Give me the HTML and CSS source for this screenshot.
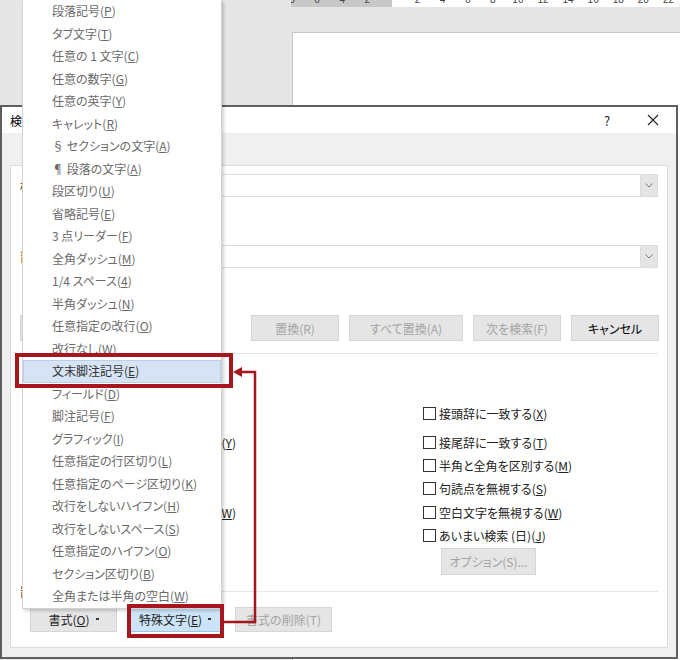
FILE: index.html
```html
<!DOCTYPE html>
<html lang="ja">
<head>
<meta charset="utf-8">
<title>検索と置換</title>
<link rel="stylesheet" href="styles.css">
</head>
<body>
<div class="word">
  <div class="ruler">
    <div class="nums">
      <span>8</span><span>6</span><span>4</span><span>2</span><span></span><span>2</span><span>4</span><span>6</span><span>8</span><span>10</span><span>12</span><span>14</span><span>16</span><span>18</span><span>20</span><span>22</span>
    </div>
  </div>
  <div class="page"></div>
</div>

<div class="dialog">
  <div class="titlebar">
    <span class="title">検索と置換</span>
    <span class="help">?</span>
    <span class="close"><svg width="12" height="12" viewBox="0 0 12 12"><path d="M1 1 L11 11 M11 1 L1 11" stroke="#222" stroke-width="1.1" fill="none"/></svg></span>
  </div>
  <div class="panel">
    <div class="field-row">
      <span class="label">検索する文字列(<u>N</u>):</span>
      <div class="combo"><span class="drop"><svg width="8" height="5" viewBox="0 0 8 5"><path d="M0.5 0.5 L4 4 L7.5 0.5" stroke="#7a7a7a" stroke-width="1" fill="none"/></svg></span></div>
    </div>
    <div class="options-gap"></div>
    <div class="field-row">
      <span class="label label-alt">置換後の文字列(<u>I</u>):</span>
      <div class="combo"><span class="drop"><svg width="8" height="5" viewBox="0 0 8 5"><path d="M0.5 0.5 L4 4 L7.5 0.5" stroke="#7a7a7a" stroke-width="1" fill="none"/></svg></span></div>
    </div>
    <div class="btn-row">
      <button class="btn btn-less">&lt;&lt; オプションを減らす(<u>L</u>)</button>
      <div class="btn-group">
        <button class="btn btn-w88 disabled">置換(R)</button>
        <button class="btn btn-w114 disabled">すべて置換(A)</button>
        <button class="btn btn-w88 disabled">次を検索(F)</button>
        <button class="btn btn-w88 strong">キャンセル</button>
      </div>
    </div>
    <div class="sep"></div>
    <div class="opts">
      <div class="col col-left">
        <div class="chk-row first"><span class="box"></span><span>大文字と小文字を区別する(<u>H</u>)</span></div>
        <div class="chk-row end"><span class="box"></span><span>完全に一致する単語だけを検索する(<u>Y</u>)</span></div>
        <div class="chk-row"><span class="box"></span><span>ワイルドカードを使用する(<u>U</u>)</span></div>
        <div class="chk-row"><span class="box"></span><span>あいまい検索 (英)(<u>K</u>)</span></div>
        <div class="chk-row end"><span class="box"></span><span>英単語の異なる活用形も検索する(<u>W</u>)</span></div>
      </div>
      <div class="col">
        <div class="chk-row first"><span class="box"></span><span>接頭辞に一致する(<u>X</u>)</span></div>
        <div class="chk-row"><span class="box"></span><span>接尾辞に一致する(<u>T</u>)</span></div>
        <div class="chk-row"><span class="box"></span><span>半角と全角を区別する(<u>M</u>)</span></div>
        <div class="chk-row"><span class="box"></span><span>句読点を無視する(<u>S</u>)</span></div>
        <div class="chk-row"><span class="box"></span><span>空白文字を無視する(<u>W</u>)</span></div>
        <div class="chk-row"><span class="box"></span><span>あいまい検索 (日)(<u>J</u>)</span></div>
        <button class="btn btn-opt disabled">オプション(S)...</button>
      </div>
    </div>
    <div class="group-head"><span class="group-label">置換</span><span class="group-line"></span></div>
    <div class="bottom-row">
      <button class="btn btn-fmt">書式(<u>O</u>)<span class="caret"></span></button>
      <button class="btn btn-special">特殊文字(<u>E</u>)<span class="caret"></span></button>
      <button class="btn btn-clear disabled">書式の削除(T)</button>
    </div>
  </div>
</div>

<div class="menu">
  <div class="item">段落記号(<u>P</u>)</div>
  <div class="item">タブ文字(<u>T</u>)</div>
  <div class="item">任意の 1 文字(<u>C</u>)</div>
  <div class="item">任意の数字(<u>G</u>)</div>
  <div class="item">任意の英字(<u>Y</u>)</div>
  <div class="item">キャレット(<u>R</u>)</div>
  <div class="item">§ セクションの文字(<u>A</u>)</div>
  <div class="item">¶ 段落の文字(<u>A</u>)</div>
  <div class="item">段区切り(<u>U</u>)</div>
  <div class="item">省略記号(<u>E</u>)</div>
  <div class="item">3 点リーダー(<u>F</u>)</div>
  <div class="item">全角ダッシュ(<u>M</u>)</div>
  <div class="item">1/4 スペース(<u>4</u>)</div>
  <div class="item">半角ダッシュ(<u>N</u>)</div>
  <div class="item">任意指定の改行(<u>O</u>)</div>
  <div class="item">改行なし(<u>W</u>)</div>
  <div class="item active">文末脚注記号(<u>E</u>)</div>
  <div class="item">フィールド(<u>D</u>)</div>
  <div class="item">脚注記号(<u>F</u>)</div>
  <div class="item">グラフィック(<u>I</u>)</div>
  <div class="item">任意指定の行区切り(<u>L</u>)</div>
  <div class="item">任意指定のページ区切り(<u>K</u>)</div>
  <div class="item">改行をしないハイフン(<u>H</u>)</div>
  <div class="item">改行をしないスペース(<u>S</u>)</div>
  <div class="item">任意指定のハイフン(<u>O</u>)</div>
  <div class="item">セクション区切り(<u>B</u>)</div>
  <div class="item">全角または半角の空白(<u>W</u>)</div>
</div>

<div class="mark mark-item"></div>
<div class="mark mark-btn"></div>
<svg class="arrow" width="680" height="660" viewBox="0 0 680 660">
  <path d="M223 622 H255 V372 H239" stroke="#a6171d" stroke-width="2.5" fill="none"/>
  <polygon points="233,372 242,367 242,377" fill="#a6171d"/>
</svg>
</body>
</html>
```

FILE: styles.css
```css
* { box-sizing: border-box; }
html, body { margin: 0; padding: 0; }
body {
  width: 680px;
  height: 660px;
  overflow: hidden;
  position: relative;
  background: #e6e6e6;
  font-family: "Noto Sans CJK JP", "Noto Sans", sans-serif;
  font-size: 12px;
  font-feature-settings: "palt";
  color: #222;
}
u { text-decoration: underline; text-underline-offset: 1px; }

.word { height: 660px; background: #e6e6e6; }
.ruler {
  margin-left: 291px;
  height: 7px;
  overflow: hidden;
  background: linear-gradient(to right, #c8c8c8 101px, #ffffff 101px);
}
.nums {
  display: flex;
  margin-left: -11.5px;
  margin-top: -6px;
  font-family: "Liberation Sans", sans-serif;
  font-size: 10px;
  line-height: 12px;
  color: #444;
}
.nums span { flex: 0 0 25.1px; text-align: center; }
.page {
  margin-left: 292px;
  margin-top: 25px;
  height: 640px;
  background: #fff;
  border-top: 1px solid #c6c6c6;
  border-left: 1px solid #c6c6c6;
}

.dialog {
  position: absolute;
  left: 0;
  top: 105px;
  width: 678px;
  height: 554px;
  border: 2px solid #5f5f5f;
  background: #f0f0f0;
}
.titlebar {
  height: 26px;
  background: #fff;
  display: flex;
  align-items: center;
  padding-left: 8px;
  padding-right: 13px;
}
.title { font-size: 12px; color: #000; }
.help { margin-left: auto; width: 20px; text-align: center; font-size: 13px; color: #222; }
.close { width: 20px; margin-left: 26px; display: flex; justify-content: center; }

.panel {
  margin: 32px 8px 0 8px;
  height: 483px;
  background: #fff;
  border: 1px solid #dcdcdc;
  padding: 8px 9px 0 9px;
}
.field-row {
  display: grid;
  grid-template-columns: 120px 1fr;
  height: 23px;
  align-items: center;
}
.label { line-height: 23px; color: #222; white-space: nowrap; }
.label-alt { color: #9a5a1e; }
.combo {
  height: 23px;
  border: 1px solid #dcdcdc;
  background: #fff;
  display: flex;
  justify-content: flex-end;
}
.drop {
  width: 17px;
  background: #e5e5e5;
  border-left: 1px solid #dcdcdc;
  display: flex;
  align-items: center;
  justify-content: center;
}
.options-gap { height: 48px; }

.btn {
  font-family: inherit;
  font-size: 12px;
  font-feature-settings: "palt";
  background: #e5e5e5;
  border: 1px solid #d6d6d6;
  color: #222;
  padding: 0;
  margin: 0;
  display: inline-flex;
  align-items: center;
  justify-content: center;
  white-space: nowrap;
}
.btn.disabled { color: #a3a3a3; }
.btn.strong { color: #000; }
.btn-row {
  display: flex;
  justify-content: space-between;
  margin-top: 47px;
  height: 26px;
  margin-right: -1px;
}
.btn-less { width: 160px; height: 26px; }
.btn-group { display: flex; gap: 10px; }
.btn-w88 { width: 88px; height: 26px; }
.btn-w114 { width: 114px; height: 26px; }

.sep { margin-top: 12px; border-top: 1px solid #e6e6e6; }

.opts {
  display: grid;
  grid-template-columns: 216px 1fr;
  column-gap: 187px;
  padding-top: 47.5px;
}
.col { display: flex; flex-direction: column; }
.col-left { padding-left: 10px; }
.chk-row {
  height: 23.3px;
  display: flex;
  align-items: center;
  gap: 3px;
  white-space: nowrap;
  color: #222;
}
.chk-row.first { height: 23px; margin-bottom: 6px; }
.chk-row.end { justify-content: flex-end; overflow: hidden; }
.box {
  width: 13px;
  height: 13px;
  border: 1px solid #333;
  background: #fff;
  flex: 0 0 13px;
}
.btn-opt { margin-top: 1px; margin-left: 18px; width: 95px; height: 27px; }

.group-head {
  margin-top: 10px;
  height: 14px;
  display: flex;
  align-items: center;
  gap: 6px;
}
.group-label { line-height: 14px; color: #222; }
.group-line { flex: 1; border-top: 1px solid #e6e6e6; }

.bottom-row {
  margin-top: 8px;
  padding-left: 10px;
  display: flex;
  height: 25px;
}
.btn-fmt { width: 87px; height: 25px; }
.btn-special {
  width: 92px;
  height: 25px;
  margin-left: 12px;
  background: #cce4f7;
  border-color: #9cc7ea;
}
.btn-clear { width: 97px; height: 25px; margin-left: 14px; }
.caret {
  display: inline-block;
  width: 3px;
  height: 2px;
  background: #333;
  margin-left: 6px;
}

.menu {
  position: absolute;
  left: 22px;
  top: 0;
  width: 200px;
  background: #fff;
  border: 1px solid #d2d2d2;
  border-top: none;
  box-shadow: 2px 2px 3px rgba(0, 0, 0, 0.18);
}
.item {
  height: 22.5px;
  line-height: 22.5px;
  padding-left: 29px;
  color: #6a6a6a;
  white-space: nowrap;
}
.item.active {
  background: #d6e3f4;
  outline: 1px solid #b9cfeb;
  outline-offset: -1px;
  color: #333;
}

.mark {
  position: absolute;
  border: 4px solid #a6171d;
}
.mark-item { left: 15px; top: 353px; width: 218px; height: 35px; }
.mark-btn { left: 127px; top: 604px; width: 97px; height: 34px; }
.arrow { position: absolute; left: 0; top: 0; pointer-events: none; }
```
